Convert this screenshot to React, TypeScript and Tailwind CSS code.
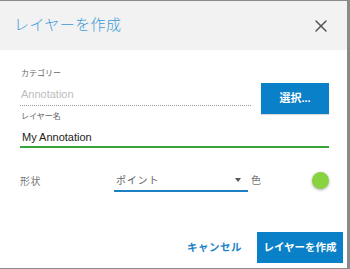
import React from 'react';
import { X } from 'lucide-react';

const font = { fontFamily: '"Liberation Sans", "Noto Sans CJK JP", sans-serif' };

const App: React.FC = () => {
  return (
    <div className="w-[350px] h-[269px] bg-[#8a8a8a] pt-px overflow-hidden" style={font}>
      <div className="w-[347px] h-[267px] bg-white flex flex-col">
        {/* Header */}
        <div className="h-[49px] shrink-0 bg-[#f2f2f2] flex items-center justify-between pl-[14px] pr-[16px]">
          <h1 className="text-[15px] font-light text-[#3a9ad8] tracking-[0.4px]">レイヤーを作成</h1>
          <X size={20} strokeWidth={1.8} className="text-[#555]" />
        </div>

        {/* Body */}
        <div className="pl-[20px] pr-[18px] pt-[19px]">
          <div className="flex items-start gap-[10px]">
            <div className="flex-1">
              <div className="text-[8px] text-[#666] leading-[10px] pl-px">カテゴリー</div>
              <div className="mt-[8px] text-[11px] text-[#bdbdbd] leading-[14px] pl-px pb-[4px] border-b border-dotted border-[#9a9a9a]">
                Annotation
              </div>
            </div>
            <button className="mt-[14px] -mb-[8px] w-[68px] h-[31px] bg-[#0a80c8] text-white text-[11px] font-bold shadow-[0_1px_1px_rgba(0,0,0,0.15)]">
              選択...
            </button>
          </div>
          <div className="text-[8px] text-[#666] leading-[10px] mt-[6px] pl-px">レイヤー名</div>
          <div className="mt-[8px] text-[11px] text-[#222] leading-[14px] pl-[2px] pb-[2px] border-b-2 border-[#3aa23a] w-[309px]">
            My Annotation
          </div>

          <div className="flex items-center mt-[22px]">
            <div className="w-[94px] text-[10px] text-[#777] tracking-[0.5px]">形状</div>
            <div className="w-[134px] h-[22px] border-b-2 border-[#1d7fc4] flex items-center justify-between pl-[2px] pr-[7px]">
              <span className="text-[10px] text-[#666] tracking-[0.8px]">ポイント</span>
              <svg width="6" height="4" viewBox="0 0 6 4"><path d="M0 0h6L3 4z" fill="#555" /></svg>
            </div>
            <div className="ml-[3px] text-[10px] text-[#777] flex-1 -mt-[2px]">色</div>
            <div className="w-[17px] h-[17px] rounded-full bg-[#88d33f] shadow-[0_1px_3px_rgba(0,0,0,0.35)] -mt-[2px]" />
          </div>
        </div>

        {/* Footer */}
        <div className="mt-auto mb-[5px] flex items-center justify-end gap-[15px] pr-[4px]">
          <button className="text-[10.5px] font-bold text-[#1a82c6] tracking-[0.5px]">キャンセル</button>
          <button className="w-[86px] h-[31px] bg-[#0a80c8] text-white text-[10.5px] font-bold">
            レイヤーを作成
          </button>
        </div>
      </div>
    </div>
  );
};

export default App;
